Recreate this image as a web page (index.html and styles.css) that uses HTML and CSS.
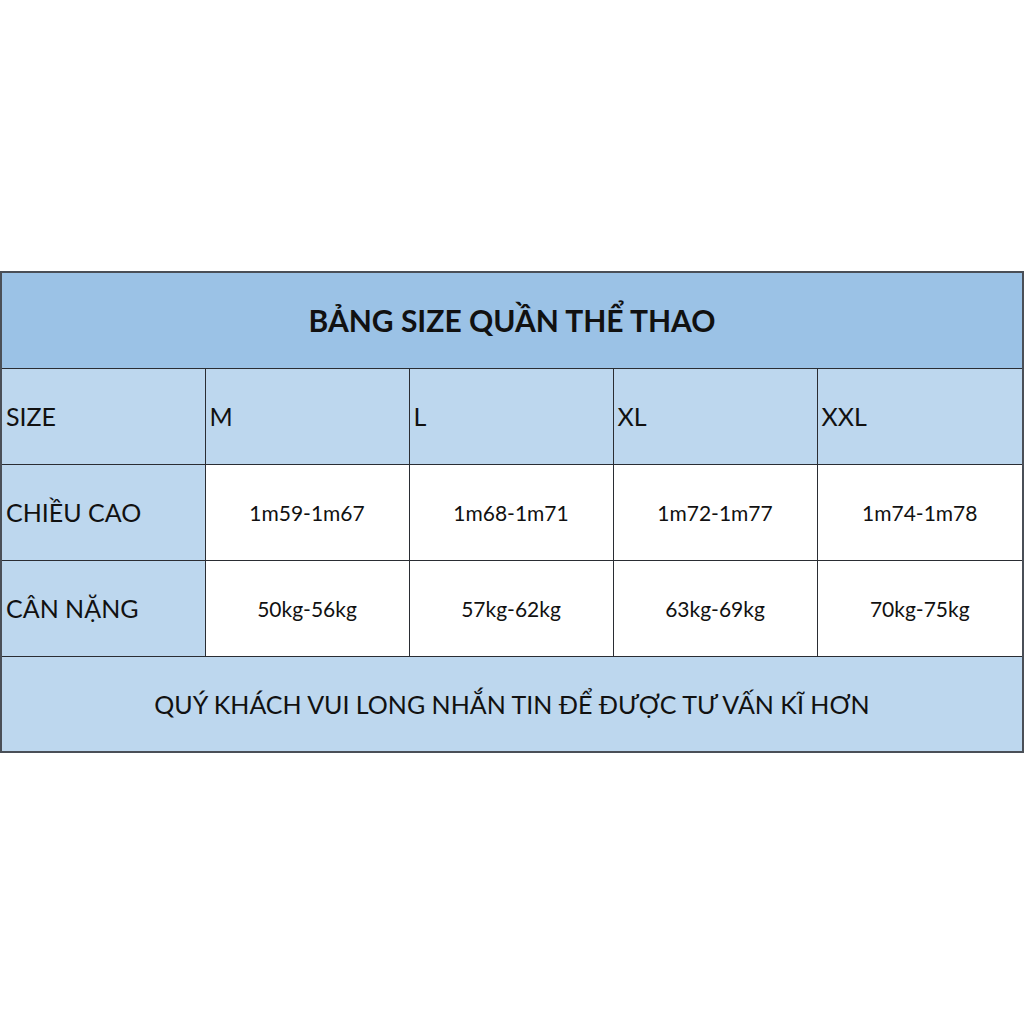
FILE: index.html
```html
<!DOCTYPE html>
<html lang="vi">
<head>
<meta charset="utf-8">
<link rel="stylesheet" href="styles.css">
</head>
<body>
<div class="page">
  <table class="size-table">
    <colgroup>
      <col class="c1"><col class="c2"><col class="c3"><col class="c4"><col class="c5">
    </colgroup>
    <tr class="r-title"><td colspan="5">BẢNG SIZE QUẦN THỂ THAO</td></tr>
    <tr class="r-size">
      <td class="lbl">SIZE</td><td class="lbl">M</td><td class="lbl">L</td><td class="lbl">XL</td><td class="lbl">XXL</td>
    </tr>
    <tr class="r-data">
      <td class="lbl">CHIỀU CAO</td><td class="val">1m59-1m67</td><td class="val">1m68-1m71</td><td class="val">1m72-1m77</td><td class="val">1m74-1m78</td>
    </tr>
    <tr class="r-data">
      <td class="lbl">CÂN NẶNG</td><td class="val">50kg-56kg</td><td class="val">57kg-62kg</td><td class="val">63kg-69kg</td><td class="val">70kg-75kg</td>
    </tr>
    <tr class="r-foot"><td colspan="5">QUÝ KHÁCH VUI LONG NHẮN TIN ĐỂ ĐƯỢC TƯ VẤN KĨ HƠN</td></tr>
  </table>
</div>
</body>
</html>
```
FILE: styles.css
```css
html, body {
  margin: 0;
  padding: 0;
  background: #ffffff;
}
.page {
  width: 1024px;
  height: 1024px;
  padding-top: 271px;
  box-sizing: border-box;
}
.size-table {
  border-collapse: collapse;
  table-layout: fixed;
  width: 1022px;
  font-family: Lato, "Open Sans", sans-serif;
  color: #111;
  border: 2px solid #4a4f57;
}
.c1 { width: 204px; }
.c2, .c3, .c4 { width: 204px; }
.c5 { width: 206px; }
.size-table td {
  height: 96px;
  padding: 0;
  border: 1px solid #2a2d33;
  box-sizing: border-box;
}
.r-title td {
  background: #9bc2e6;
  text-align: center;
  font-weight: 700;
  font-size: 30px;
}
.lbl {
  background: #bdd7ee;
  text-align: left;
  padding-left: 4px !important;
  font-size: 25px;
}
.val {
  background: #ffffff;
  text-align: center;
  font-size: 21px;
}
.r-foot td {
  background: #bdd7ee;
  text-align: center;
  font-size: 25px;
}
```
